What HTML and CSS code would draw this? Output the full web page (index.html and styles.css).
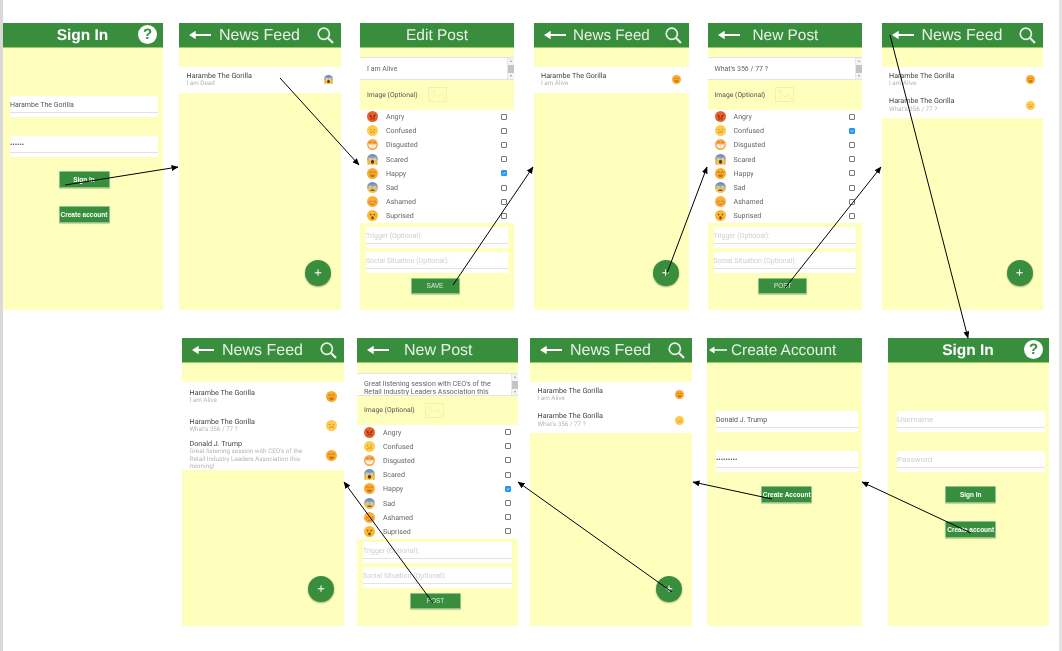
FILE: index.html
```html
<!DOCTYPE html>
<html lang="en">
<head>
    <meta charset="UTF-8">
    <meta name="viewport" content="width=device-width, initial-scale=1.0">
    <title>App flow</title>
    <link rel="stylesheet" href="styles.css">
</head>
<body>
    <svg class="defs" aria-hidden="true">
        <defs>
            <linearGradient id="fear" x1="0" y1="0" x2="0" y2="1">
                <stop offset="0.1" stop-color="#5f8ad8"/>
                <stop offset="0.65" stop-color="#f2c552"/>
            </linearGradient>
            <marker id="head" markerWidth="7" markerHeight="6" refX="6.5" refY="3" orient="auto" markerUnits="userSpaceOnUse">
                <path d="M0 0L7 3L0 6Z" fill="#000"/>
            </marker>
            <symbol id="back" viewBox="0 0 23 12">
                <path d="M0 6L7 1.5V5H23V7H7V10.5Z" fill="currentColor"/>
            </symbol>
            <symbol id="lens" viewBox="0 0 17 17">
                <circle cx="6.8" cy="6.8" r="5.6" fill="none" stroke="currentColor" stroke-width="1.7"/>
                <path d="M10.8 10.8L16 16" stroke="currentColor" stroke-width="2.2"/>
            </symbol>
            <symbol id="picture" viewBox="0 0 20 16">
                <rect x="0.5" y="0.5" width="19" height="15" fill="none" stroke="currentColor"/>
                <circle cx="5.5" cy="5" r="1.8" fill="none" stroke="currentColor"/>
                <path d="M2 14L8 8L11 11L14 6.5L18 14" fill="none" stroke="currentColor"/>
            </symbol>
            <symbol id="angry" viewBox="0 0 24 24">
                <circle cx="12" cy="12" r="12" fill="#e9602b"/>
                <path d="M5 8L10 11M19 8L14 11" stroke="#7a2410" stroke-width="2"/>
                <circle cx="8.5" cy="12.5" r="1.6" fill="#5a1a0a"/><circle cx="15.5" cy="12.5" r="1.6" fill="#5a1a0a"/>
                <path d="M7 18Q12 14 17 18" fill="none" stroke="#7a2410" stroke-width="2"/>
            </symbol>
            <symbol id="confused" viewBox="0 0 24 24">
                <circle cx="12" cy="12" r="12" fill="#ffcb4c"/>
                <circle cx="8" cy="10" r="1.5" fill="#b9802a"/><circle cx="16" cy="10" r="1.5" fill="#b9802a"/>
                <path d="M7 17Q12 13 17 16" fill="none" stroke="#b9802a" stroke-width="1.8"/>
            </symbol>
            <symbol id="disgusted" viewBox="0 0 24 24">
                <circle cx="12" cy="12" r="12" fill="#f9a94a"/>
                <path d="M5 8Q8 5 10 8M14 8Q16 5 19 8" fill="none" stroke="#a4601c" stroke-width="1.8"/>
                <path d="M3 12H21Q20 20 12 20Q4 20 3 12Z" fill="#fff"/>
                <path d="M4 15H20M12 12V20" stroke="#e8c0a0"/>
            </symbol>
            <symbol id="scared" viewBox="0 0 24 24">
                <circle cx="12" cy="12" r="12" fill="url(#fear)"/>
                <circle cx="7.5" cy="10.5" r="2.4" fill="#fff"/><circle cx="16.5" cy="10.5" r="2.4" fill="#fff"/>
                <circle cx="7.5" cy="10.5" r="1" fill="#333"/><circle cx="16.5" cy="10.5" r="1" fill="#333"/>
                <ellipse cx="12" cy="17" rx="3.6" ry="4" fill="#5a3418"/>
                <path d="M1 24V15L5 17V24ZM23 24V15L19 17V24Z" fill="#f2b23c"/>
            </symbol>
            <symbol id="happy" viewBox="0 0 24 24">
                <circle cx="12" cy="12" r="12" fill="#fbab2a"/>
                <path d="M5 10Q8 6 11 10M13 10Q16 6 19 10" fill="none" stroke="#a8641a" stroke-width="1.8"/>
                <path d="M6 14H18Q17 20 12 20Q7 20 6 14Z" fill="#c4741e"/>
            </symbol>
            <symbol id="sad" viewBox="0 0 24 24">
                <circle cx="12" cy="12" r="12" fill="url(#fear)"/>
                <circle cx="7.5" cy="11" r="2.2" fill="#fff"/><circle cx="16.5" cy="11" r="2.2" fill="#fff"/>
                <circle cx="7.5" cy="11" r="1" fill="#333"/><circle cx="16.5" cy="11" r="1" fill="#333"/>
                <path d="M6 19Q12 13.5 18 19Z" fill="#5a3418"/>
                <path d="M20 12L23 18H18Z" fill="#8fc4f0"/>
            </symbol>
            <symbol id="ashamed" viewBox="0 0 24 24">
                <circle cx="12" cy="12" r="12" fill="#fbb03b"/>
                <path d="M5 11Q8 13 10 11M14 11Q16 13 19 11" fill="none" stroke="#a8641a" stroke-width="1.8"/>
                <path d="M8 18H16" stroke="#a8641a" stroke-width="1.8"/>
                <circle cx="5" cy="15" r="2.5" fill="#f58f3a"/><circle cx="19" cy="15" r="2.5" fill="#f58f3a"/>
            </symbol>
            <symbol id="surprised" viewBox="0 0 24 24">
                <circle cx="12" cy="12" r="12" fill="#fdb92c"/>
                <circle cx="8" cy="10" r="1.8" fill="#7a4a14"/><circle cx="16" cy="10" r="1.8" fill="#7a4a14"/>
                <ellipse cx="12" cy="17" rx="3" ry="3.6" fill="#7a4a14"/>
            </symbol>
        </defs>
    </svg>

    <div class="canvas">
        <div class="row row-top">
            <!-- sign in, filled -->
            <section class="screen auth first">
                <header class="bar center"><h1 class="bold">Sign In</h1><span class="help">?</span></header>
                <div class="auth-body">
                    <div class="field"><input type="text" value="Harambe The Gorilla"></div>
                    <div class="field"><input type="password" value="secret"></div>
                    <button class="btn tiny first-btn">Sign In</button>
                    <button class="btn tiny">Create account</button>
                </div>
            </section>

            <section class="screen feed">
                <header class="bar">
                    <svg class="back"><use href="#back"/></svg><h1>News Feed</h1>
                    <svg class="lens"><use href="#lens"/></svg>
                </header>
                <ul class="posts">
                    <li class="post">
                        <div class="post-text"><div class="name">Harambe The Gorilla</div><div class="msg">I am Dead</div></div>
                        <svg class="face"><use href="#scared"/></svg>
                    </li>
                </ul>
                <div class="fab">+</div>
            </section>

            <section class="screen editor">
                <header class="bar center"><h1>Edit Post</h1></header>
                <div class="post-box"><textarea class="post-input" readonly>I am Alive</textarea><div class="scroll"><i></i></div></div>
                <div class="image-row"><span>Image (Optional)</span><svg class="picture"><use href="#picture"/></svg></div>
                <ul class="moods">
                    <li><svg class="mood-face"><use href="#angry"/></svg><span>Angry</span><input type="checkbox"></li>
                    <li><svg class="mood-face"><use href="#confused"/></svg><span>Confused</span><input type="checkbox"></li>
                    <li><svg class="mood-face"><use href="#disgusted"/></svg><span>Disgusted</span><input type="checkbox"></li>
                    <li><svg class="mood-face"><use href="#scared"/></svg><span>Scared</span><input type="checkbox"></li>
                    <li><svg class="mood-face"><use href="#happy"/></svg><span>Happy</span><input type="checkbox" checked></li>
                    <li><svg class="mood-face"><use href="#sad"/></svg><span>Sad</span><input type="checkbox"></li>
                    <li><svg class="mood-face"><use href="#ashamed"/></svg><span>Ashamed</span><input type="checkbox"></li>
                    <li><svg class="mood-face"><use href="#surprised"/></svg><span>Suprised</span><input type="checkbox"></li>
                </ul>
                <div class="extras">
                    <div class="field"><input type="text" placeholder="Trigger (Optional):"></div>
                    <div class="field"><input type="text" placeholder="Social Situation (Optional):"></div>
                    <button class="btn save">SAVE</button>
                </div>
            </section>

            <section class="screen feed">
                <header class="bar">
                    <svg class="back"><use href="#back"/></svg><h1>News Feed</h1>
                    <svg class="lens"><use href="#lens"/></svg>
                </header>
                <ul class="posts">
                    <li class="post">
                        <div class="post-text"><div class="name">Harambe The Gorilla</div><div class="msg">I am Alive</div></div>
                        <svg class="face"><use href="#happy"/></svg>
                    </li>
                </ul>
                <div class="fab">+</div>
            </section>

            <section class="screen editor">
                <header class="bar"><svg class="back"><use href="#back"/></svg><h1 class="wide-gap">New Post</h1></header>
                <div class="post-box"><textarea class="post-input" readonly>What's 356 / 77 ?</textarea><div class="scroll"><i></i></div></div>
                <div class="image-row"><span>Image (Optional)</span><svg class="picture"><use href="#picture"/></svg></div>
                <ul class="moods">
                    <li><svg class="mood-face"><use href="#angry"/></svg><span>Angry</span><input type="checkbox"></li>
                    <li><svg class="mood-face"><use href="#confused"/></svg><span>Confused</span><input type="checkbox" checked></li>
                    <li><svg class="mood-face"><use href="#disgusted"/></svg><span>Disgusted</span><input type="checkbox"></li>
                    <li><svg class="mood-face"><use href="#scared"/></svg><span>Scared</span><input type="checkbox"></li>
                    <li><svg class="mood-face"><use href="#happy"/></svg><span>Happy</span><input type="checkbox"></li>
                    <li><svg class="mood-face"><use href="#sad"/></svg><span>Sad</span><input type="checkbox"></li>
                    <li><svg class="mood-face"><use href="#ashamed"/></svg><span>Ashamed</span><input type="checkbox"></li>
                    <li><svg class="mood-face"><use href="#surprised"/></svg><span>Suprised</span><input type="checkbox"></li>
                </ul>
                <div class="extras">
                    <div class="field"><input type="text" placeholder="Trigger (Optional):"></div>
                    <div class="field"><input type="text" placeholder="Social Situation (Optional):"></div>
                    <button class="btn save">POST</button>
                </div>
            </section>

            <section class="screen feed">
                <header class="bar">
                    <svg class="back"><use href="#back"/></svg><h1>News Feed</h1>
                    <svg class="lens"><use href="#lens"/></svg>
                </header>
                <ul class="posts">
                    <li class="post">
                        <div class="post-text"><div class="name">Harambe The Gorilla</div><div class="msg">I am Alive</div></div>
                        <svg class="face"><use href="#happy"/></svg>
                    </li>
                    <li class="post">
                        <div class="post-text"><div class="name">Harambe The Gorilla</div><div class="msg">What's 356 / 77 ?</div></div>
                        <svg class="face"><use href="#confused"/></svg>
                    </li>
                </ul>
                <div class="fab">+</div>
            </section>
        </div>

        <div class="row row-bottom">
            <section class="screen feed long">
                <header class="bar">
                    <svg class="back"><use href="#back"/></svg><h1>News Feed</h1>
                    <svg class="lens"><use href="#lens"/></svg>
                </header>
                <ul class="posts">
                    <li class="post">
                        <div class="post-text"><div class="name">Harambe The Gorilla</div><div class="msg">I am Alive</div></div>
                        <svg class="face"><use href="#happy"/></svg>
                    </li>
                    <li class="post">
                        <div class="post-text"><div class="name">Harambe The Gorilla</div><div class="msg">What's 356 / 77 ?</div></div>
                        <svg class="face"><use href="#confused"/></svg>
                    </li>
                    <li class="post wrapped">
                        <div class="post-text"><div class="name">Donald J. Trump</div><div class="msg">Great listening session with CEO's of the Retail Industry Leaders Association this morning!</div></div>
                        <svg class="face"><use href="#happy"/></svg>
                    </li>
                </ul>
                <div class="fab">+</div>
            </section>

            <section class="screen editor">
                <header class="bar"><svg class="back"><use href="#back"/></svg><h1 class="wide-gap">New Post</h1></header>
                <div class="post-box"><textarea class="post-input two-lines" readonly>Great listening session with CEO's of the Retail Industry Leaders Association this morning!</textarea><div class="scroll"><i></i></div></div>
                <div class="image-row"><span>Image (Optional)</span><svg class="picture"><use href="#picture"/></svg></div>
                <ul class="moods">
                    <li><svg class="mood-face"><use href="#angry"/></svg><span>Angry</span><input type="checkbox"></li>
                    <li><svg class="mood-face"><use href="#confused"/></svg><span>Confused</span><input type="checkbox"></li>
                    <li><svg class="mood-face"><use href="#disgusted"/></svg><span>Disgusted</span><input type="checkbox"></li>
                    <li><svg class="mood-face"><use href="#scared"/></svg><span>Scared</span><input type="checkbox"></li>
                    <li><svg class="mood-face"><use href="#happy"/></svg><span>Happy</span><input type="checkbox" checked></li>
                    <li><svg class="mood-face"><use href="#sad"/></svg><span>Sad</span><input type="checkbox"></li>
                    <li><svg class="mood-face"><use href="#ashamed"/></svg><span>Ashamed</span><input type="checkbox"></li>
                    <li><svg class="mood-face"><use href="#surprised"/></svg><span>Suprised</span><input type="checkbox"></li>
                </ul>
                <div class="extras">
                    <div class="field"><input type="text" placeholder="Trigger (Optional):"></div>
                    <div class="field"><input type="text" placeholder="Social Situation (Optional):"></div>
                    <button class="btn save">POST</button>
                </div>
            </section>

            <section class="screen feed">
                <header class="bar">
                    <svg class="back"><use href="#back"/></svg><h1>News Feed</h1>
                    <svg class="lens"><use href="#lens"/></svg>
                </header>
                <ul class="posts">
                    <li class="post">
                        <div class="post-text"><div class="name">Harambe The Gorilla</div><div class="msg">I am Alive</div></div>
                        <svg class="face"><use href="#happy"/></svg>
                    </li>
                    <li class="post">
                        <div class="post-text"><div class="name">Harambe The Gorilla</div><div class="msg">What's 356 / 77 ?</div></div>
                        <svg class="face"><use href="#confused"/></svg>
                    </li>
                </ul>
                <div class="fab">+</div>
            </section>

            <section class="screen auth">
                <header class="bar flush"><svg class="back short"><use href="#back"/></svg><h1 class="narrow-gap">Create Account</h1></header>
                <div class="auth-body">
                    <div class="field"><input type="text" value="Donald J. Trump"></div>
                    <div class="field"><input type="password" value="trumpcard"></div>
                    <button class="btn tiny first-btn">Create Account</button>
                </div>
            </section>

            <section class="screen auth">
                <header class="bar center"><h1 class="bold">Sign In</h1><span class="help">?</span></header>
                <div class="auth-body">
                    <div class="field"><input type="text" placeholder="Username"></div>
                    <div class="field"><input type="password" placeholder="Password"></div>
                    <button class="btn tiny first-btn">Sign In</button>
                    <button class="btn tiny">Create account</button>
                </div>
            </section>
        </div>

        <!-- flow arrows between the screens -->
        <svg class="links" width="1062" height="651">
            <line x1="65" y1="185" x2="178" y2="167"/>
            <line x1="280" y1="78" x2="359" y2="165"/>
            <line x1="453" y1="285" x2="533" y2="167"/>
            <line x1="667" y1="273" x2="707" y2="167"/>
            <line x1="785" y1="288" x2="881" y2="167"/>
            <line x1="890" y1="35" x2="968" y2="338"/>
            <line x1="971" y1="533" x2="862" y2="482"/>
            <line x1="772" y1="499" x2="693" y2="482"/>
            <line x1="672" y1="592" x2="518" y2="482"/>
            <line x1="433" y1="603" x2="344" y2="482"/>
        </svg>
    </div>
</body>
</html>
```

FILE: styles.css
```css
* {
    box-sizing: border-box;
}
body {
    margin: 0;
    background: #fff;
    font-family: 'Liberation Sans', Arial, sans-serif;
    text-rendering: geometricPrecision;
    overflow: hidden;
}
.defs {
    position: absolute;
    width: 0;
    height: 0;
}
.canvas {
    position: relative;
    width: 1062px;
    height: 651px;
    border-left: 3px solid #d9d9d9;
    border-right: 3px solid #e3e3e3;
    overflow: hidden;
}
.row {
    display: flex;
    align-items: flex-start;
}
.row-top {
    margin-top: 23px;
}
.row-bottom {
    margin-top: 28px;
}
.screen {
    position: relative;
    flex: none;
    height: 287px;
    background: #ffffbd;
    filter: blur(0.45px);
}
.row-bottom .screen {
    height: 288px;
}

/* screen widths and gaps, they differ a bit in the mockup */
.row-top .screen:nth-child(1) { width: 160px; }
.row-top .screen:nth-child(2) { width: 162px; margin-left: 16px; }
.row-top .screen:nth-child(3) { width: 154px; margin-left: 19px; }
.row-top .screen:nth-child(4) { width: 155px; margin-left: 19.5px; }
.row-top .screen:nth-child(5) { width: 154.5px; margin-left: 19px; }
.row-top .screen:nth-child(6) { width: 161px; margin-left: 19.5px; }
.row-bottom .screen:nth-child(1) { width: 162px; margin-left: 179px; }
.row-bottom .screen:nth-child(2) { width: 161px; margin-left: 13px; }
.row-bottom .screen:nth-child(3) { width: 162px; margin-left: 12px; }
.row-bottom .screen:nth-child(4) { width: 155px; margin-left: 15px; }
.row-bottom .screen:nth-child(5) { width: 161px; margin-left: 26px; }

.bar {
    position: relative;
    display: flex;
    align-items: center;
    height: 25px;
    padding: 0 7px 0 10px;
    background: #388e3c;
    border-bottom: 1px solid #9ccc65;
    color: #e8f1e8;
}
.bar.center {
    justify-content: center;
}
.bar.flush {
    padding-left: 2px;
}
.bar h1 {
    margin: 0 0 0 8px;
    padding-top: 1px;
    font-size: 16px;
    font-weight: normal;
    white-space: nowrap;
}
.row-bottom .bar h1 {
    padding-top: 1.5px;
}
.bar.center h1 {
    margin: 0 3px 0 0;
    font-size: 15.5px;
}
.bar.center h1.bold {
    margin-right: 4px;
    font-size: 15.5px;
    font-weight: bold;
    color: #fff;
}
.bar h1.wide-gap {
    margin-left: 15px;
}
.row-top .bar h1.wide-gap {
    margin-left: 13px;
    font-size: 15.4px;
}
.row-top .screen:nth-child(4) h1 {
    margin-left: 7.5px;
    font-size: 15.2px;
}
.bar h1.narrow-gap {
    margin-left: 4px;
    font-size: 15.4px;
}
.back {
    flex: none;
    width: 22px;
    height: 12px;
    color: #fff;
}
.back.short {
    width: 18px;
}
.lens {
    flex: none;
    width: 17px;
    height: 17px;
    margin-left: auto;
}
.help {
    position: absolute;
    right: 6px;
    top: 2px;
    width: 19px;
    height: 19px;
    border-radius: 50%;
    background: #fff;
    color: #388e3c;
    font-size: 15px;
    font-weight: bold;
    line-height: 19px;
    text-align: center;
}

/* sign in / create account */
.auth-body {
    display: flex;
    flex-direction: column;
    align-items: center;
    padding: 48px 4.5px 0 9px;
}
.first .auth-body {
    padding: 48px 5px 0 7px;
}
.field {
    width: 100%;
    height: 21px;
    background: #fff;
}
.field input {
    display: block;
    width: 100%;
    height: 17px;
    padding: 2px 0 0;
    border: 0;
    border-bottom: 1px solid #e2e2e2;
    outline: none;
    background: transparent;
    font-family: 'Roboto', sans-serif;
    font-size: 7px;
    color: #555;
}
.field input::placeholder {
    color: #cfcfcf;
}
.auth .field input::placeholder {
    font-size: 8px;
}
.auth-body .field + .field {
    margin-top: 19px;
}
.btn {
    display: block;
    padding: 0;
    border: 1px solid #8bc48d;
    border-radius: 1px;
    background: #388e3c;
    color: #fff;
    font-family: 'Liberation Sans', sans-serif;
    box-shadow: 0 1px 1px rgba(0, 0, 0, 0.2);
}
.btn.tiny {
    width: 51px;
    height: 17px;
    margin-top: 18px;
    font-size: 6.5px;
    font-weight: bold;
    white-space: nowrap;
}
.btn.first-btn {
    margin-top: 14px;
}

/* feeds */
.posts {
    margin: 19px 0 0;
    padding: 0;
    list-style: none;
    background: #fff;
}
.post {
    display: flex;
    align-items: center;
    justify-content: space-between;
    height: 25.5px;
    padding: 0 8px 0 7.5px;
}
.post-text {
    width: 122px;
}
.name {
    font-family: 'Roboto', sans-serif;
    font-size: 7.2px;
    line-height: 8.5px;
    color: #444;
}
.msg {
    font-family: 'Roboto', sans-serif;
    font-size: 6.3px;
    line-height: 7.5px;
    color: #b5b5b5;
}
.face {
    flex: none;
    width: 9px;
    height: 9px;
}
.long .post {
    height: 29px;
    padding-right: 7px;
}
.long .post.wrapped {
    height: 30px;
}
.long .face {
    width: 11px;
    height: 11px;
}
.fab {
    position: absolute;
    right: 10px;
    bottom: 24px;
    width: 26px;
    height: 26px;
    border-radius: 50%;
    background: #388e3c;
    color: #fff;
    font-size: 13px;
    line-height: 25px;
    text-align: center;
    box-shadow: 0 1px 2px rgba(0, 0, 0, 0.35);
}

/* new / edit post */
.post-box {
    display: flex;
    height: 23px;
    margin-top: 9px;
    background: #fff;
    border-top: 1px solid #e4e4e4;
    border-bottom: 1px solid #e4e4e4;
}
.row-bottom .post-box {
    margin-top: 9.5px;
}
.post-input {
    flex: 1;
    min-width: 0;
    margin: 0;
    padding: 7px 0 0 7px;
    border: 0;
    outline: none;
    resize: none;
    overflow: hidden;
    background: transparent;
    font-family: 'Roboto', sans-serif;
    font-size: 7px;
    line-height: 8.5px;
    color: #666;
}
.post-input.two-lines {
    padding: 6px 10px 0 7px;
    font-size: 7.1px;
}
.scroll {
    position: relative;
    flex: none;
    width: 7px;
    padding-top: 7px;
    background: #f4f4f4;
    border-left: 1px solid #e6e6e6;
}
.scroll i {
    display: block;
    height: 8px;
    background: #c4c4c4;
}
.scroll::before,
.scroll::after {
    content: '';
    position: absolute;
    left: 1.5px;
    border-left: 1.5px solid transparent;
    border-right: 1.5px solid transparent;
}
.scroll::before {
    top: 2px;
    border-bottom: 2px solid #999;
}
.scroll::after {
    bottom: 2px;
    border-top: 2px solid #999;
}
.image-row {
    display: flex;
    align-items: center;
    height: 29.5px;
    padding-left: 7px;
    font-family: 'Roboto', sans-serif;
    font-size: 6.8px;
    color: #555;
}
.picture {
    width: 19px;
    height: 15px;
    margin-left: 10px;
    color: #f1f1a8;
}
.moods {
    margin: 0;
    padding: 0 7px 0 7px;
    list-style: none;
    background: #fff;
}
.moods li {
    display: flex;
    align-items: center;
    height: 14.2px;
    font-family: 'Roboto', sans-serif;
    font-size: 7.1px;
    color: #666;
}
.mood-face {
    flex: none;
    width: 11px;
    height: 11px;
    margin-right: 8px;
}
.moods input {
    appearance: none;
    width: 6px;
    height: 6px;
    margin: 0 0 0 auto;
    border: 1px solid #777;
    border-radius: 1px;
    background: #fff;
}
.moods input:checked {
    border-color: #2196f3;
    background: #2196f3 url("data:image/svg+xml,%3Csvg xmlns='http://www.w3.org/2000/svg' viewBox='0 0 4 4'%3E%3Cpath d='M.6 2L1.7 3L3.4 1' fill='none' stroke='%23fff' stroke-width='.7'/%3E%3C/svg%3E") center / contain no-repeat;
}
.extras {
    display: flex;
    flex-direction: column;
    align-items: center;
    padding: 3.5px 6px 0;
}
.extras .field + .field {
    margin-top: 4px;
}
.btn.save {
    width: 49px;
    height: 16px;
    margin: 5px 4px 0 0;
    font-size: 6.5px;
    color: #dcebdc;
}
.row-bottom .btn.save {
    width: 51px;
    margin-top: 4.5px;
}

.links {
    position: absolute;
    left: -3px;
    top: 0;
    pointer-events: none;
}
.links line {
    stroke: #000;
    stroke-width: 1;
    marker-end: url(#head);
}
```
